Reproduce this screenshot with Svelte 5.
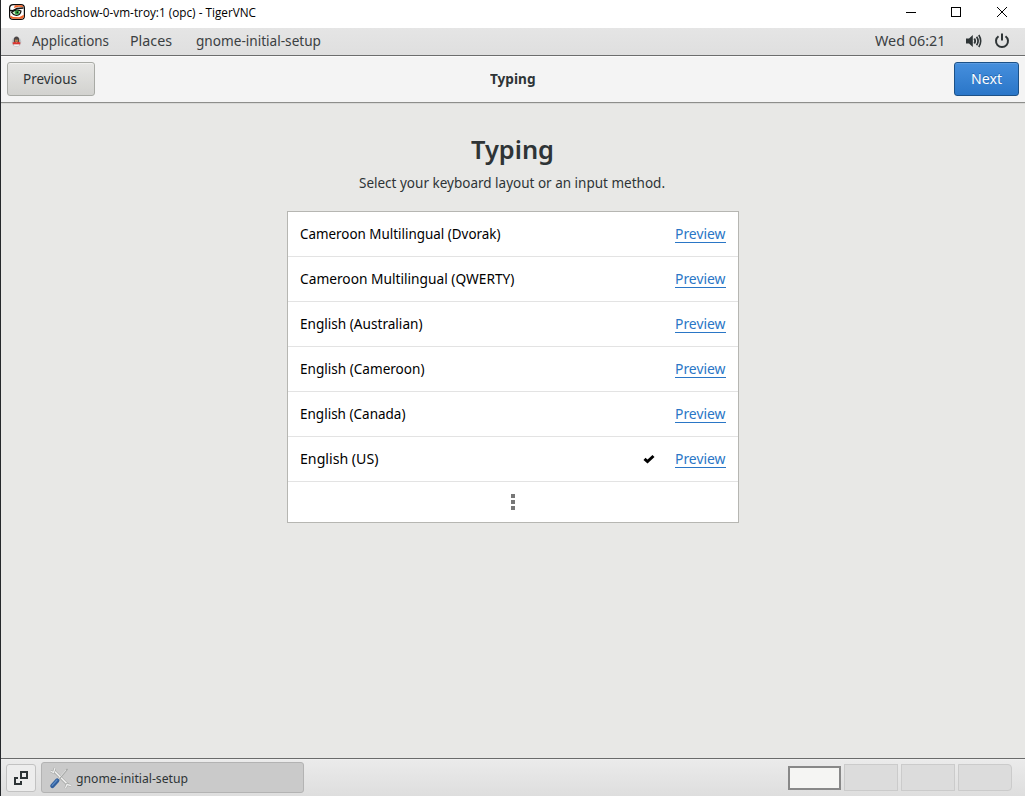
<script>
  const layouts = [
    { name: 'Cameroon Multilingual (Dvorak)', width: 200.5 },
    { name: 'Cameroon Multilingual (QWERTY)', width: 214.5 },
    { name: 'English (Australian)', width: 122.5 },
    { name: 'English (Cameroon)', width: 124.5 },
    { name: 'English (Canada)', width: 105.5 },
    { name: 'English (US)', width: 78.5, selected: true }
  ];

  // Condenses a label horizontally to its nominal width.
  function fit(node, width) {
    const inner = node.firstElementChild;
    inner.style.transform = `scaleX(${width / inner.getBoundingClientRect().width})`;
  }
</script>

{#snippet label(text, width)}
  <span class="fit" style="width:{width}px" use:fit={width}><span>{text}</span></span>
{/snippet}

<div class="window">
  <header class="titlebar">
    <svg class="tiger" width="16" height="16" viewBox="0 0 16 16">
      <rect x=".6" y=".6" width="14.800" height="14.800" rx="3.500" fill="#fff" stroke="#0b0b0b" stroke-width="1.200" />
      <path d="M6 1.200h7l1.800 2-5-.4-5 1.200z" fill="#f0652b" />
      <path d="M1.200 11.500l3 1.600 6 .2 4.600-2.500v2.400l-1.800 1.600H3l-1.800-1.600z" fill="#f0652b" />
      <path d="M1 6.500l3 .2 4-2.200 6.500-.4" fill="none" stroke="#111" stroke-width="1.500" />
      <path d="M2.500 8.200q4.500-3.500 9.500-1.200-.5 4-4.500 4.500Q4 11 2.500 8.200z" fill="#d5efc9" stroke="#111" stroke-width="1.200" />
      <circle cx="8" cy="8.500" r="2.200" fill="#36a344" /><circle cx="8.300" cy="8.400" r=".8" fill="#07140b" />
    </svg>
    <span class="wintitle">{@render label('dbroadshow-0-vm-troy:1 (opc) - TigerVNC', 226)}</span>
    <svg class="controls" width="120" height="28" viewBox="0 0 120 28" fill="none" stroke="#000" shape-rendering="crispEdges">
      <path d="M1 12.5h10M46.500 7.500h9v9h-9z" />
      <path d="M92 7l10 10M102 7L92 17" shape-rendering="auto" />
    </svg>
  </header>

  <nav class="topbar">
    <svg class="mascot" width="11" height="11" viewBox="0 0 11 11">
      <circle cx="5.500" cy="6" r="4.800" fill="#c3c5c9" />
      <path d="M2.800 4q0-3.500 2.700-3.500T8.200 4v2H2.800z" fill="#4b4546" />
      <path d="M4 3.600h3v2.200H4z" fill="#b98147" />
      <path d="M1.500 6.500l2.500-.7 1.500.7 1.500-.7 2.500.7-.5 2H2z" fill="#d9352f" />
      <path d="M2.500 8.500h6L7.500 10h-4z" fill="#f0f0f0" />
    </svg>
    {@render label('Applications', 77)}
    <span class="places">{@render label('Places', 42)}</span>
    <span class="app">{@render label('gnome-initial-setup', 125)}</span>
    <span class="clock">{@render label('Wed 06:21', 70.5)}</span>
    <svg class="volume" width="16" height="16" viewBox="0 0 16 16" fill="none" stroke="#2e3436">
      <path d="M0 5.500h3L6.800 2v12L3 10.500H0z" fill="#2e3436" stroke="none" />
      <path d="M8.300 5.500q1.800 2.500 0 5" stroke-width="1.800" /><path d="M10.600 3.700q3 4.300 0 8.600" stroke-width="1.700" />
      <path d="M12.800 2q3.800 6 0 12" stroke-width="1.600" />
    </svg>
    <svg class="power" width="16" height="16" viewBox="0 0 16 16" fill="none" stroke="#2e3436" stroke-width="2">
      <path d="M4.500 3.200a6 6 0 1 0 7 0M8 .5v7" />
    </svg>
  </nav>

  <section class="headerbar">
    <button class="prev">{@render label('Previous', 54)}</button>
    <strong>{@render label('Typing', 45.5)}</strong>
    <button class="next">{@render label('Next', 31)}</button>
  </section>

  <main>
    <h1>{@render label('Typing', 83)}</h1>
    <p>{@render label('Select your keyboard layout or an input method.', 306)}</p>
    <ul>
      {#each layouts as item}
        <li>
          {@render label(item.name, item.width)}
          {#if item.selected}
            <svg class="check" width="12" height="10" viewBox="0 0 12 10"><path d="M1.500 4.800l3 2.700L10.500 2" fill="none" stroke="#000" stroke-width="3" /></svg>
          {/if}
          <a href="#preview" class:after={item.selected}>{@render label('Preview', 50.5)}</a>
        </li>
      {/each}
      <li class="more"><i></i><i></i><i></i></li>
    </ul>
  </main>

  <footer>
    <div class="desktop">
      <svg width="16" height="16" viewBox="0 0 16 16" fill="none" stroke="#2e3436" stroke-width="2" shape-rendering="crispEdges">
        <path d="M8 2h6v6H8z" /><path d="M5 8H2v6h6v-3" />
      </svg>
    </div>
    <div class="task">
      <svg width="24" height="24" viewBox="0 0 24 24" fill="none">
        <path d="M5 5L19 19" stroke="#a6a8a6" stroke-width="2.800" />
        <path d="M5 4.700L19 18.700" stroke="#f3f3f2" stroke-width="1.500" />
        <path d="M1.500 5l3 1.500L6 2M16.500 22l1.500-3.500 4 1" stroke="#a4a6a4" stroke-width="2.400" />
        <path d="M1.500 5l3 1.500L6 2M16.500 22l1.500-3.500 4 1" stroke="#eee" stroke-width="1.300" />
        <path d="M18.500 3L8.500 15" stroke="#a4a6a4" stroke-width="1.300" /><path d="M17 4L8.500 14" stroke="#f3f3f3" stroke-width=".7" />
        <path d="M8.300 14.500L3.300 20" stroke="#315f9d" stroke-width="4.200" stroke-linecap="round" />
        <path d="M8 14L3.200 19.400" stroke="#5d8cc5" stroke-width="1.200" stroke-linecap="round" />
      </svg>
      {@render label('gnome-initial-setup', 112)}
    </div>
    <div class="workspaces"><i class="active"></i><i></i><i></i><i></i></div>
  </footer>
</div>

<style>
  :global(body) { margin: 0; overflow: hidden; }
  * { box-sizing: border-box; }
  .window { width: 1025px; height: 796px; display: flex; flex-direction: column; border-left: 1px solid #25282b; background: #e8e8e6; color: #2e3436; font: 14px/20px "Noto Sans", sans-serif; }
  .fit { display: inline-block; white-space: nowrap; flex: none; text-align: left; }
  .fit > span { display: inline-block; transform-origin: 0 50%; }
  .titlebar { height: 28px; background: #fff; display: flex; padding-left: 8px; flex: none; color: #000; }
  .tiger { margin-top: 4px; margin-right: 5px; }
  .wintitle { font: 12px/16px "Open Sans", sans-serif; padding-top: 5px; }
  .controls { margin-left: auto; }
  .topbar { height: 28px; flex: none; display: flex; align-items: center; padding: 0 15px 1px 10px; background: linear-gradient(#e5e5e5, #dfdfdf); border-bottom: 1px solid #6c6d6d; color: #3b4042; }
  .mascot { margin-right: 10px; }
  .places { margin-left: 21px; }
  .app { margin-left: 24px; }
  .clock { margin-left: auto; }
  .volume { margin-left: 20.5px; }
  .power { margin-left: 12px; }
  .headerbar { height: 47px; flex: none; display: flex; justify-content: space-between; align-items: center; padding: 0 6px 1px; background: #f4f4f4; border-top: 1px solid #fbfbfb; border-bottom: 1px solid #8d8e8b; box-shadow: 0 1px #d9d9d7; }
  button { height: 34px; padding: 0; border-radius: 3px; font: inherit; color: inherit; }
  .prev { width: 88px; padding-right: 2px; border: 1px solid #a8aaa5; background: linear-gradient(#e6e6e4, #d2d2cf); box-shadow: inset 0 1px #f1f1ef; }
  .headerbar strong { margin-left: -23px; }
  .next { width: 65px; color: #fff; border: 1px solid #1c5187; background: linear-gradient(#468fdd, #2a76c8); box-shadow: inset 0 1px #5b9be1; text-shadow: 0 -1px #2165ae; }
  main { flex: 1; display: flex; flex-direction: column; align-items: center; padding-right: 2px; }
  h1 { margin: 27px 0 0; font-size: 26px; line-height: 38px; font-weight: 600; }
  p { margin: 5px 0 0; height: 20px; line-height: 20px; }
  ul { list-style: none; margin: 18px 0 0 1px; padding: 0; width: 452px; height: 312px; background: #fff; border: 1px solid #b6b6b2; color: #000; }
  li { height: 45px; display: flex; align-items: center; padding: 0 12px; border-bottom: 1px solid #e3e3e3; }
  a { margin-left: auto; margin-bottom: 2px; height: 19px; color: #2a76c6; text-decoration: none; border-bottom: 1px solid #2a76c6; line-height: 20px; }
  .check { margin-left: auto; margin-top: 0; }
  .after { margin-left: 20.5px; }
  .more { height: 40px; padding: 0; flex-direction: column; justify-content: center; gap: 2px; border: 0; }
  .more i { width: 4px; height: 4px; background: #777; }
  footer { height: 38px; flex: none; display: flex; align-items: center; border-top: 1px solid #6a6b6b; padding: 0 13px 0 5px; background: linear-gradient(#ebebeb, #dedede); box-shadow: inset 0 1px #f0f0f0; }
  .desktop { width: 30px; height: 28px; border: 1px solid #c2c2c2; border-radius: 3px; background: #ededed; display: grid; place-items: center; }
  .task { margin-left: 5px; width: 263px; height: 31px; display: flex; align-items: center; border: 1px solid #b3b3b3; border-radius: 3px; background: #cacaca; padding-left: 7px; font-size: 13px; }
  .task svg { margin-right: 3px; }
  .workspaces { margin-left: auto; display: flex; align-items: center; gap: 3px; }
  .workspaces i { width: 54px; height: 27px; border: 1px solid #cbcbcb; background: #dcdcdc; }
  .workspaces .active { width: 53px; height: 24px; border: 2px solid #888; background: #f5f5f3; }
  .workspaces i:last-child { border-radius: 0 4px 4px 0; }
</style>
